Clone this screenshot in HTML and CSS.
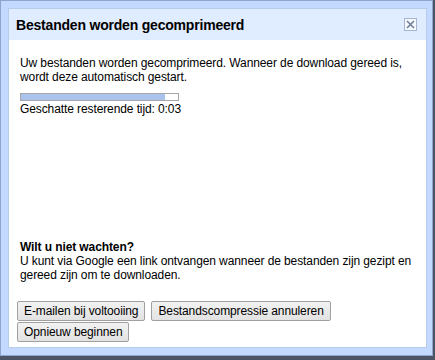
FILE: index.html
```html
<!DOCTYPE html>
<html lang="nl">
<head>
    <meta charset="UTF-8">
    <title>Bestanden worden gecomprimeerd</title>
    <link rel="stylesheet" href="styles.css">
</head>
<body>
    <div class="dialog">
        <div class="inner">
            <div class="header">
                <h1>Bestanden worden gecomprimeerd</h1>
                <span class="close">
                    <svg width="9" height="9" viewBox="0 0 9 9">
                        <path d="M1 1 L8 8 M8 1 L1 8" stroke="#6f7f99" stroke-width="1.6"/>
                    </svg>
                </span>
            </div>
            <div class="content">
                <p>Uw bestanden worden gecomprimeerd. Wanneer de download gereed is, wordt deze automatisch gestart.</p>
                <div class="progress"><div class="fill" style="width: 92%"></div></div>
                <div class="remaining">Geschatte resterende tijd: 0:03</div>

                <div class="wait">
                    <div class="wait-title">Wilt u niet wachten?</div>
                    <p>U kunt via Google een link ontvangen wanneer de bestanden zijn gezipt en gereed zijn om te downloaden.</p>
                </div>

                <div class="buttons">
                    <button>E-mailen bij voltooiing</button>
                    <button>Bestandscompressie annuleren</button>
                    <button>Opnieuw beginnen</button>
                </div>
            </div>
        </div>
    </div>
</body>
</html>
```

FILE: styles.css
```css
html, body {
    margin: 0;
    height: 100%;
}
body {
    font-family: 'Liberation Sans', Arial, sans-serif;
    color: #000000;
    background-color: #4c5566;
}
.dialog {
    box-sizing: border-box;
    width: 433px;
    height: 356px;
    background-color: #c3d9ff; /* light blue frame */
    border: 1px solid #8ea6cc;
    padding: 7px 5px 7px 7px;
}
.inner {
    box-sizing: border-box;
    height: 100%;
    background-color: #ffffff;
    border: 1px solid #b7cbeb;
    display: flex;
    flex-direction: column;
}
.header {
    display: flex;
    justify-content: space-between;
    align-items: center;
    background-color: #e0ecff;
    height: 31px;
    padding: 0 9px 0 7px;
}
h1 {
    margin: 0;
    font-size: 14px;
    font-weight: bold;
    letter-spacing: -0.2px;
}
.close {
    display: flex;
    align-items: center;
    justify-content: center;
    width: 11px;
    height: 11px;
    border: 1px solid #a6b6d0;
    background-color: #f4f8ff;
}
.content {
    flex: 1;
    display: flex;
    flex-direction: column;
    padding: 16px 3px 5px 11px;
    font-size: 12px;
    line-height: 14px;
    letter-spacing: -0.1px;
}
p {
    margin: 0;
}
.progress {
    width: 157px;
    height: 6px;
    border: 1px solid #a7a7a7;
    margin-top: 9px;
    background-color: #ffffff;
}
.fill {
    height: 100%;
    background-color: #a9c3ec;
}
.remaining {
    margin-top: 1px;
}
.wait {
    margin-top: auto;
}
.wait-title {
    font-weight: bold;
}
.buttons {
    margin-top: 19px;
    margin-left: -3px;
    display: flex;
    flex-wrap: wrap;
    width: 330px;
    gap: 1px 6px;
}
button {
    font-family: 'Liberation Sans', Arial, sans-serif;
    font-size: 12px;
    letter-spacing: -0.1px;
    height: 20px;
    padding: 0 6px;
    border: 1px solid #a0a0a0;
    border-radius: 2px;
    background: linear-gradient(#f2f2f2, #e2e2e2);
    color: #000000;
}
```
